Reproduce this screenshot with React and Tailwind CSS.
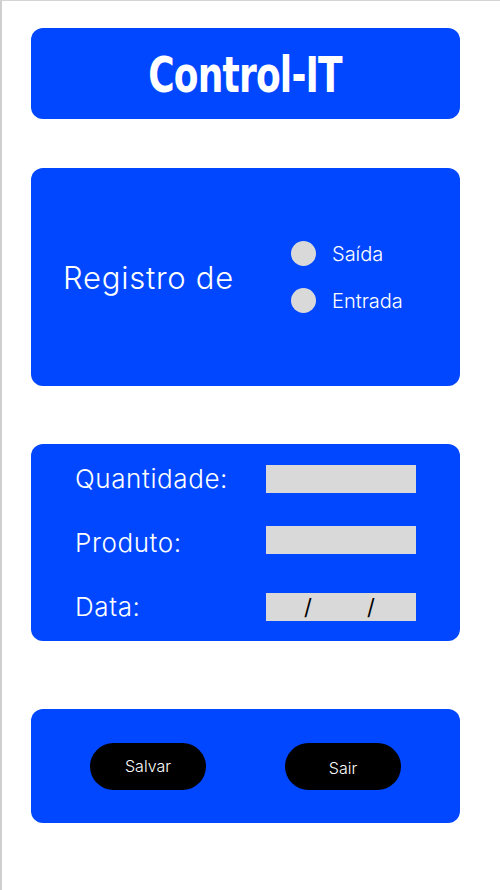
import React, { useState } from "react";

const panel = "w-[429px] bg-[#0047ff] rounded-[12px]";

export default function App() {
  const [tipo, setTipo] = useState("");

  return (
    <div
      className="h-[890px] w-[500px] bg-white border-t border-t-[#d4d4d4] border-l-2 border-l-[#cfcfcf] pl-[29px] pt-[27px] overflow-hidden"
      style={{ fontFamily: "Inter, 'Noto Sans', sans-serif" }}
    >
      {/* header */}
      <div className={`${panel} h-[91px] flex items-center justify-center`}>
        <h1
          className="text-white font-bold text-[50px] leading-none tracking-[-1px] scale-x-[0.8] mt-[2px]"
          style={{ fontFamily: "'DejaVu Sans Condensed', 'DejaVu Sans', sans-serif" }}
        >
          Control-IT
        </h1>
      </div>

      {/* tipo de registro */}
      <div className={`${panel} h-[218px] mt-[49px] flex items-center pl-[32px]`}>
        <p className="w-[228px] text-white text-[31px] tracking-[0.75px] font-[350] leading-none">Registro de</p>
        <div className="flex flex-col gap-[22px]">
          {["Saída", "Entrada"].map((op) => (
            <label key={op} className="flex items-center gap-[16px] cursor-pointer" onClick={() => setTipo(op)}>
              <span className="w-[25px] h-[25px] rounded-full bg-[#d9d9d9] flex items-center justify-center">
                {tipo === op && <span className="w-[11px] h-[11px] rounded-full bg-[#0047ff]" />}
              </span>
              <span className="text-white text-[20px] font-[350] leading-none">{op}</span>
            </label>
          ))}
        </div>
      </div>

      {/* campos */}
      <div className={`${panel} h-[197px] mt-[58px] pt-[21px] pl-[44px]`}>
        <div className="flex items-center h-[28px]">
          <span className="w-[191px] text-white text-[26px] tracking-[0.6px] font-[350] leading-none">Quantidade:</span>
          <input className="w-[150px] h-[28px] bg-[#d9d9d9] outline-none px-2 text-sm" />
        </div>
        <div className="flex items-center h-[28px] mt-[33px]">
          <span className="w-[191px] text-white text-[26px] tracking-[0.6px] font-[350] leading-none mt-[6px]">Produto:</span>
          <input className="w-[150px] h-[28px] bg-[#d9d9d9] outline-none px-2 text-sm" />
        </div>
        <div className="flex items-center h-[28px] mt-[39px]">
          <span className="w-[191px] text-white text-[26px] tracking-[0.6px] font-[350] leading-none">Data:</span>
          <div className="w-[150px] h-[28px] bg-[#d9d9d9] flex items-center text-black text-[22px] leading-none pl-[38px]">
            <span>/</span>
            <span className="ml-[55px]">/</span>
          </div>
        </div>
      </div>

      {/* botoes */}
      <div className={`${panel} h-[114px] mt-[68px] flex items-center justify-between px-[59px]`}>
        <button className="w-[116px] h-[47px] rounded-full bg-black text-white text-[16px] font-[350]">Salvar</button>
        <button className="w-[116px] h-[47px] rounded-full bg-black text-white text-[16px] font-[350] pt-[4px]">Sair</button>
      </div>
    </div>
  );
}
